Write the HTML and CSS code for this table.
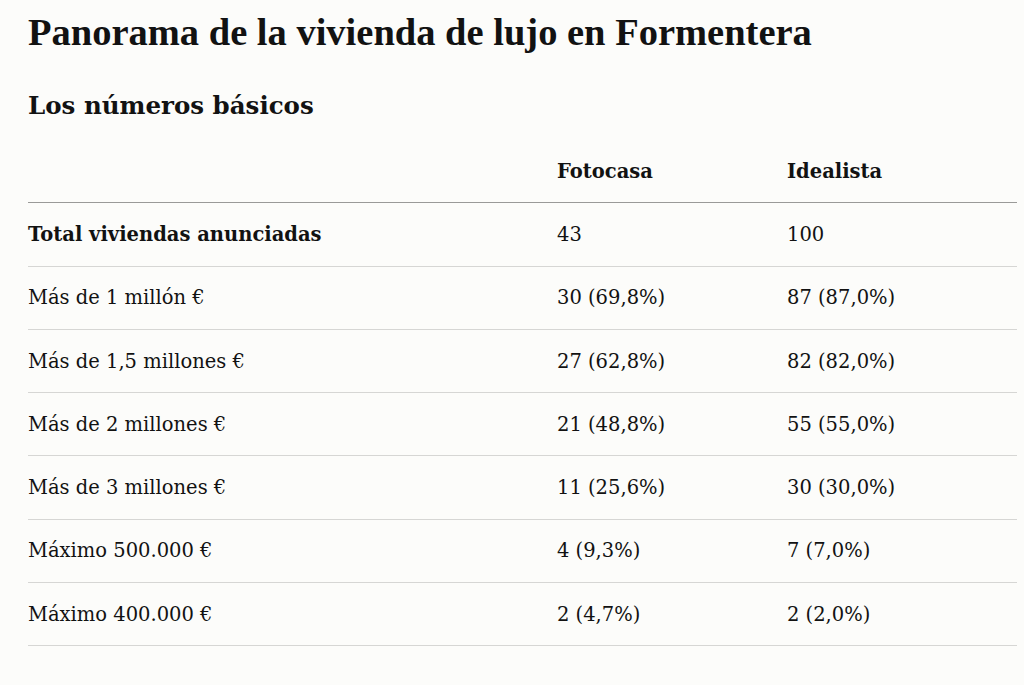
FILE: index.html
```
<!DOCTYPE html>
<html lang="es">
<head>
<meta charset="utf-8">
<title>Panorama de la vivienda de lujo en Formentera</title>
<link rel="stylesheet" href="styles.css">
</head>
<body>
<main class="page">
  <h1 class="title">Panorama de la vivienda de lujo en Formentera</h1>
  <h2 class="subtitle">Los números básicos</h2>
  <table class="data">
    <thead>
      <tr><th class="label"></th><th>Fotocasa</th><th>Idealista</th></tr>
    </thead>
    <tbody>
      <tr><td class="label strong">Total viviendas anunciadas</td><td>43</td><td>100</td></tr>
      <tr><td class="label">Más de 1 millón €</td><td>30 (69,8%)</td><td>87 (87,0%)</td></tr>
      <tr><td class="label">Más de 1,5 millones €</td><td>27 (62,8%)</td><td>82 (82,0%)</td></tr>
      <tr><td class="label">Más de 2 millones €</td><td>21 (48,8%)</td><td>55 (55,0%)</td></tr>
      <tr><td class="label">Más de 3 millones €</td><td>11 (25,6%)</td><td>30 (30,0%)</td></tr>
      <tr><td class="label">Máximo 500.000 €</td><td>4 (9,3%)</td><td>7 (7,0%)</td></tr>
      <tr><td class="label">Máximo 400.000 €</td><td>2 (4,7%)</td><td>2 (2,0%)</td></tr>
    </tbody>
  </table>
</main>
</body>
</html>
```
FILE: styles.css
```
html, body {
  margin: 0;
  padding: 0;
  background: #fcfcfa;
}
body {
  font-family: "Liberation Serif", "Times New Roman", serif;
  color: #121212;
}
.page {
  padding: 10px 7px 0 28px;
}
.title {
  margin: 0;
  font-size: 38.5px;
  line-height: 44px;
  font-weight: 700;
}
.subtitle {
  margin: 35px 0 0;
  font-family: "DejaVu Serif", "Liberation Serif", serif;
  font-size: 24.5px;
  line-height: 34px;
  font-weight: 700;
}
.data {
  width: 100%;
  border-collapse: collapse;
  margin-top: 17px;
  font-family: "DejaVu Serif", "Liberation Serif", serif;
  font-size: 19.5px;
}
.data th, .data td {
  text-align: left;
  padding: 0;
  height: 62.3px;
  vertical-align: middle;
  border-bottom: 1px solid #d6d6d4;
}
.data th {
  font-weight: 700;
  border-bottom: 1px solid #9a9a98;
}
.data .label {
  width: 529px;
}
.data td:nth-child(2), .data th:nth-child(2) {
  width: 230px;
}
.data .strong {
  font-weight: 700;
}
```
